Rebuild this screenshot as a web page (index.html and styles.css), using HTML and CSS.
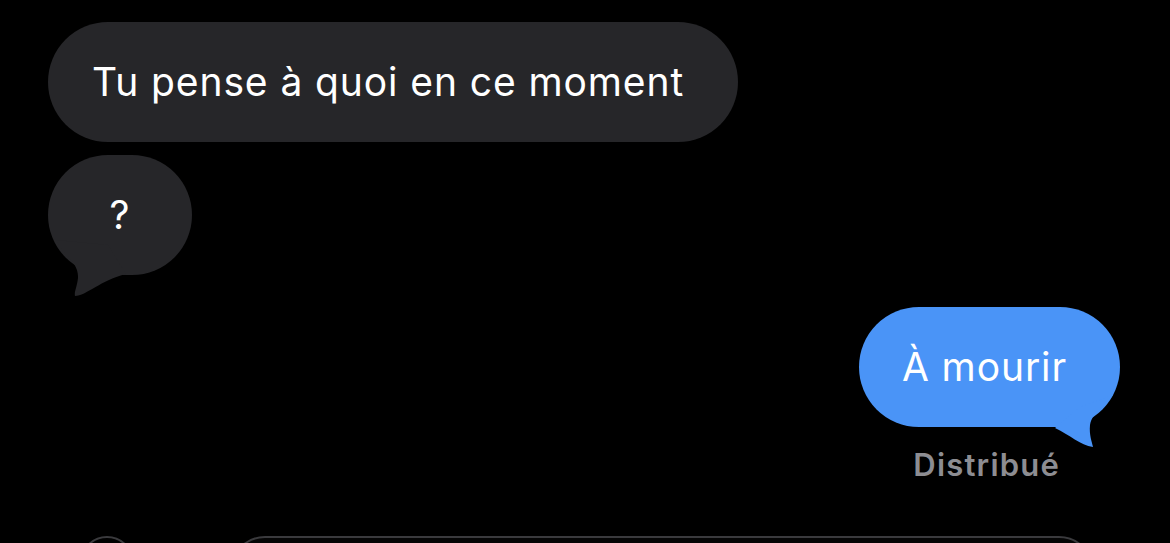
FILE: index.html
```html
<!DOCTYPE html>
<html lang="fr">
<head>
    <meta charset="utf-8">
    <title>Messages</title>
    <link rel="stylesheet" href="styles.css">
</head>
<body>
    <div class="thread">
        <div class="bubble in">Tu pense à quoi en ce moment</div>
        <div class="bubble in small">
            ?
            <svg class="tail left" width="100" height="145" viewBox="0 0 100 145">
                <path d="M8 85 C15 100 31 107 30 123 C29 132 26 137 27 141 C38 141 53 125 78 119 L60 90 Z" fill="#262629"/>
            </svg>
        </div>
        <div class="bubble out">
            À mourir
            <svg class="tail right" width="100" height="145" viewBox="0 0 100 145">
                <path d="M93 88 C85 100 72 105 70 118 C69 128 72 135 73 140 C60 138 50 128 35 121 L60 100 Z" fill="#4a94f7"/>
            </svg>
        </div>
        <div class="status">Distribué</div>

        <div class="composer">
            <div class="plus"></div>
            <div class="field"></div>
        </div>
    </div>
</body>
</html>
```

FILE: styles.css
```css
body {
    margin: 0;
    height: 543px;
    overflow: hidden;
    background-color: #000;
    font-family: Inter, "Noto Sans", sans-serif;
    color: #fff;
}
.thread {
    display: flex;
    flex-direction: column;
    align-items: flex-start;
    padding: 22px 50px 0 48px;
}
.bubble {
    position: relative;
    height: 120px;
    line-height: 120px;
    padding: 0 54px 0 44px;
    border-radius: 60px;
    font-size: 39px;
    letter-spacing: 0.9px;
    white-space: nowrap;
}
.bubble .tail {
    position: absolute;
    top: 0;
    overflow: visible;
}
.tail.left {
    left: 0;
}
.tail.right {
    right: 0;
}
.in {
    background-color: #262629;
}
.in.small {
    margin-top: 13px;
    width: 144px;
    padding: 0;
    text-align: center;
}
.out {
    align-self: flex-end;
    margin-top: 32px;
    padding: 0 53px 0 43px;
    background-color: #4a94f7;
}
.status {
    align-self: flex-end;
    margin: 21px 60px 0 0;
    font-size: 31px;
    line-height: 34px;
    font-weight: 600;
    letter-spacing: 1.2px;
    color: #8d8d92;
}
.composer {
    align-self: stretch;
    display: flex;
    align-items: flex-start;
    gap: 96px;
    height: 7px;
    margin-top: 54px;
    padding-left: 32px;
    overflow: hidden;
}
.plus {
    width: 54px;
    height: 54px;
    border-radius: 50%;
    border: 2px solid #3a3a3d;
    box-sizing: border-box;
    flex: none;
}
.field {
    width: 864px;
    height: 70px;
    border-radius: 40px;
    border: 2px solid #3a3a3d;
    box-sizing: border-box;
    background-color: #050505;
}
```
